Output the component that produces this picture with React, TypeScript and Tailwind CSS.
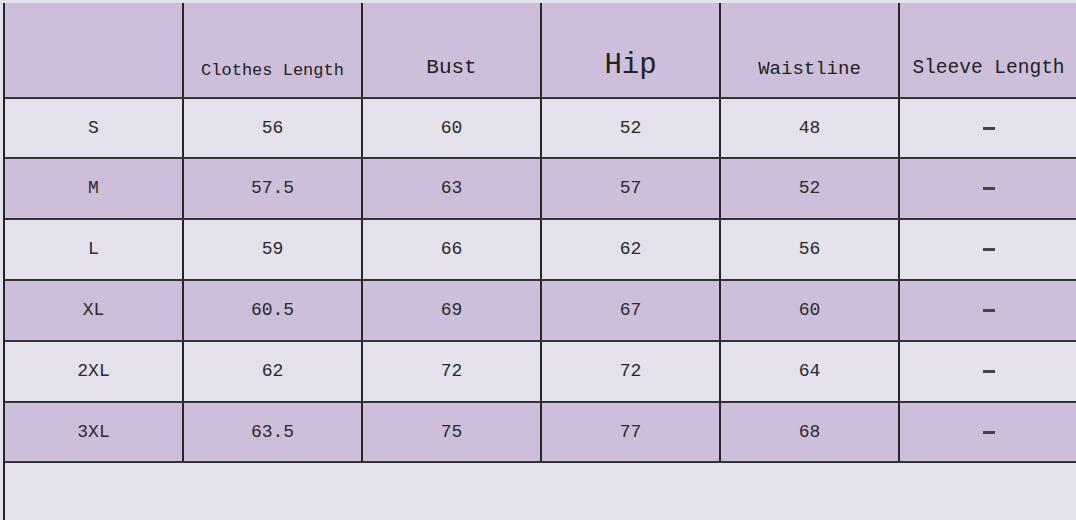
import React from "react";

const headers: { label: string; cls: string }[] = [
  { label: "", cls: "" },
  { label: "Clothes Length", cls: "text-[17px] pb-[14px]" },
  { label: "Bust", cls: "text-[21px] pb-[14px]" },
  { label: "Hip", cls: "text-[29px] pb-[10px]" },
  { label: "Waistline", cls: "text-[19px] pb-[14px]" },
  { label: "Sleeve Length", cls: "text-[19.5px] pb-[14px]" },
];

const rows: string[][] = [
  ["S", "56", "60", "52", "48", "-"],
  ["M", "57.5", "63", "57", "52", "-"],
  ["L", "59", "66", "62", "56", "-"],
  ["XL", "60.5", "69", "67", "60", "-"],
  ["2XL", "62", "72", "72", "64", "-"],
  ["3XL", "63.5", "75", "77", "68", "-"],
];

const heights = ["h-[60px]", "h-[61px]", "h-[61px]", "h-[61px]", "h-[61px]", "h-[60px]"];

export default function App() {
  return (
    <div
      className="w-[1076px] h-[520px] overflow-hidden bg-[#e6e2ed] pt-[3px] text-[#222]"
      style={{ fontFamily: '"Liberation Mono", "DejaVu Sans Mono", monospace' }}
    >
      <div className="ml-[3px] h-[517px] border-l-2 border-[#262626] flex flex-col w-[1100px]">
        <div className="flex h-[96px] bg-[#cdbfdc] border-b-2 border-[#333]">
          {headers.map((h, i) => (
            <div
              key={i}
              className={`w-[179px] shrink-0 border-r-2 border-[#262626] flex items-end justify-center ${h.cls}`}
            >
              {h.label}
            </div>
          ))}
        </div>
        {rows.map((r, ri) => (
          <div
            key={ri}
            className={`flex ${heights[ri]} border-b-2 border-[#333] ${
              ri % 2 === 0 ? "bg-[#e4e0ec]" : "bg-[#cdbfdc]"
            }`}
          >
            {r.map((c, ci) => (
              <div
                key={ci}
                className="w-[179px] shrink-0 border-r-2 border-[#262626] flex items-center justify-center text-[18px] text-[#2a2a2a]"
              >
                {c === "-" ? (
                  <span className="block w-[12px] h-[3px] bg-[#444]" />
                ) : (
                  c
                )}
              </div>
            ))}
          </div>
        ))}
        <div className="flex-1 bg-[#e4e1ec]" />
      </div>
    </div>
  );
}
